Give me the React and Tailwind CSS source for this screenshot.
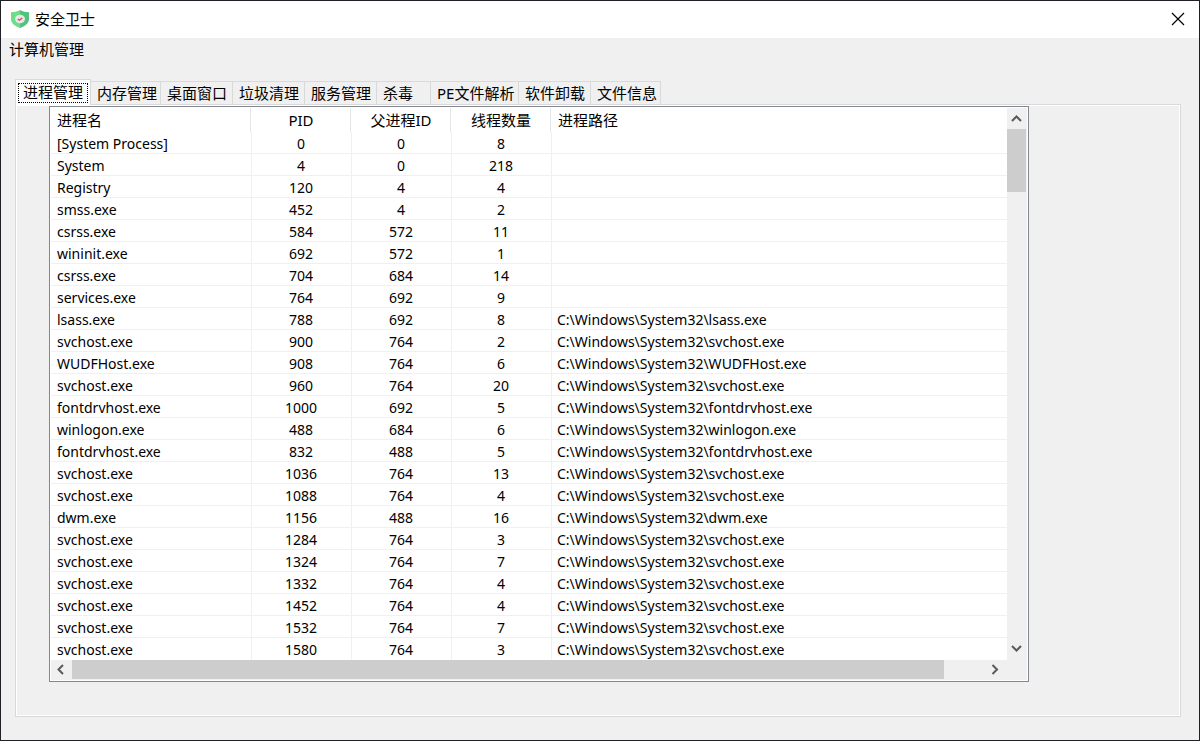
import React from "react";

const tabs = [
  ["进程管理", "w-[76px]"],
  ["内存管理", "w-[70px]"],
  ["桌面窗口", "w-[72px]"],
  ["垃圾清理", "w-[72px]"],
  ["服务管理", "w-[72px]"],
  ["杀毒", "w-[54px]"],
  ["PE文件解析", "w-[88px]"],
  ["软件卸载", "w-[72px]"],
  ["文件信息", "w-[70px]"],
];

const columns = ["进程名", "PID", "父进程ID", "线程数量", "进程路径"];

const SYS = "C:\\Windows\\System32\\";

const rows = [
  ["[System Process]", 0, 0, 8, ""],
  ["System", 4, 0, 218, ""],
  ["Registry", 120, 4, 4, ""],
  ["smss.exe", 452, 4, 2, ""],
  ["csrss.exe", 584, 572, 11, ""],
  ["wininit.exe", 692, 572, 1, ""],
  ["csrss.exe", 704, 684, 14, ""],
  ["services.exe", 764, 692, 9, ""],
  ["lsass.exe", 788, 692, 8, SYS + "lsass.exe"],
  ["svchost.exe", 900, 764, 2, SYS + "svchost.exe"],
  ["WUDFHost.exe", 908, 764, 6, SYS + "WUDFHost.exe"],
  ["svchost.exe", 960, 764, 20, SYS + "svchost.exe"],
  ["fontdrvhost.exe", 1000, 692, 5, SYS + "fontdrvhost.exe"],
  ["winlogon.exe", 488, 684, 6, SYS + "winlogon.exe"],
  ["fontdrvhost.exe", 832, 488, 5, SYS + "fontdrvhost.exe"],
  ["svchost.exe", 1036, 764, 13, SYS + "svchost.exe"],
  ["svchost.exe", 1088, 764, 4, SYS + "svchost.exe"],
  ["dwm.exe", 1156, 488, 16, SYS + "dwm.exe"],
  ["svchost.exe", 1284, 764, 3, SYS + "svchost.exe"],
  ["svchost.exe", 1324, 764, 7, SYS + "svchost.exe"],
  ["svchost.exe", 1332, 764, 4, SYS + "svchost.exe"],
  ["svchost.exe", 1452, 764, 4, SYS + "svchost.exe"],
  ["svchost.exe", 1532, 764, 7, SYS + "svchost.exe"],
  ["svchost.exe", 1580, 764, 3, SYS + "svchost.exe"],
];

function ShieldIcon() {
  return (
    <svg width="20" height="20" viewBox="0 0 20 20" aria-hidden="true">
      <path d="M10 1 C7.5 2.6 4 3.2 1 3.2 V10 C1 14.2 5 17.3 10 19 Z" fill="#6fdc8c" />
      <path d="M10 1 C12.5 2.6 16 3.2 19 3.2 V10 C19 14.2 15 17.3 10 19 Z" fill="#4fc47a" />
      <ellipse cx="10" cy="10" rx="5" ry="4.2" fill="#e4e9ec" />
      <path d="M7.8 10.2 L9.4 11.2 L12.2 9" fill="none" stroke="#e8532f" strokeWidth="1.5" />
    </svg>
  );
}

function Chevron({ d }) {
  return (
    <svg width="19" height="19" viewBox="0 0 19 19" aria-hidden="true">
      <path d={d} fill="none" stroke="#5a5a5a" strokeWidth="2" />
    </svg>
  );
}

function TitleBar() {
  return (
    <header className="flex h-[37px] items-center justify-between bg-white pr-[11px] pb-0.5 pl-[9px]">
      <div className="flex items-center gap-[5px]">
        <ShieldIcon />
        <h1>安全卫士</h1>
      </div>
      <button type="button" aria-label="关闭" className="flex size-5 items-center justify-center">
        <svg width="14" height="14" viewBox="0 0 14 14" aria-hidden="true">
          <path d="M1 1 L13 13 M13 1 L1 13" stroke="#000" strokeWidth="1.2" />
        </svg>
      </button>
    </header>
  );
}

function TabBar() {
  return (
    <div role="tablist" className="flex items-end">
      {tabs.map(([label, width], i) =>
        i === 0 ? (
          <button
            key={label}
            type="button"
            role="tab"
            aria-selected="true"
            className={`${width} relative -mb-px h-[26px] border-x border-t border-[#d9d9d9] bg-white p-0.5 text-left`}
          >
            <span className="block h-5 border border-dotted border-black pl-1 leading-4">{label}</span>
          </button>
        ) : (
          <button
            key={label}
            type="button"
            role="tab"
            aria-selected="false"
            className={`${width} h-[23px] border-t border-r border-[#d9d9d9] pl-[6px] text-left whitespace-nowrap`}
          >
            {label}
          </button>
        )
      )}
    </div>
  );
}

function ProcessTable() {
  return (
    <table className="w-full table-fixed border-separate border-spacing-0 bg-white">
      <colgroup>
        <col className="w-[201px]" />
        <col className="w-[100px]" />
        <col className="w-[100px]" />
        <col className="w-[100px]" />
        <col />
      </colgroup>
      <thead>
        <tr>
          {columns.map((c, i) => (
            <th key={c} scope="col" className="h-6 p-0 leading-6 font-normal">
              <div
                className={
                  i === 0
                    ? "mr-px h-6 border-r border-[#e5e5e5] pl-[6px] text-left"
                    : i === 4
                      ? "h-6 pl-[6px] text-left"
                      : "mr-px h-6 border-r border-[#e5e5e5] text-center"
                }
              >
                {c}
              </div>
            </th>
          ))}
        </tr>
      </thead>
      <tbody className="text-sm leading-[19px]">
        {rows.map((r, y) => (
          <tr key={y} className="last:*:border-b-white">
            {r.map((v, x) => (
              <td
                key={x}
                className={
                  x === 0
                    ? "h-[22px] border-r border-b border-[#f0f0f0] p-0 pt-0.5 pl-[6px]"
                    : x === 4
                      ? "h-[22px] border-b border-[#f0f0f0] p-0 pt-0.5 pl-[5px]"
                      : "h-[22px] border-r border-b border-[#f0f0f0] p-0 pt-0.5 pr-px text-center"
                }
              >
                {v}
              </td>
            ))}
          </tr>
        ))}
      </tbody>
    </table>
  );
}

export default function App() {
  return (
    <div className="flex min-h-screen flex-col border border-[#1f2026] bg-[#f0f0f0] font-['Noto_Sans','Noto_Sans_CJK_SC',sans-serif] text-[15px] leading-5 text-black">
      <TitleBar />
      <nav className="h-6 px-2">
        <button type="button" className="block leading-[22px]">计算机管理</button>
      </nav>
      <main className="flex grow flex-col pt-[17px] pr-[18px] pb-[23px] pl-[14px]">
        <TabBar />
        <section className="grow border border-[#d9d9d9]">
          <div className="h-full border border-white pr-[150px] pb-[33px] pl-8">
            <div className="border border-[#828790] bg-white p-px">
              <div className="flex">
                <div className="min-w-0 grow">
                  <ProcessTable />
                </div>
                <div className="flex w-5 shrink-0 flex-col bg-[#f0f0f0]">
                  <button type="button" aria-label="向上滚动" className="h-[21px]">
                    <Chevron d="M5 12 L9.5 7.5 L14 12" />
                  </button>
                  <div className="h-[63px] w-[19px] bg-[#cdcdcd]" />
                  <div className="grow" />
                  <button type="button" aria-label="向下滚动" className="h-[21px]">
                    <Chevron d="M5 6 L9.5 10.5 L14 6" />
                  </button>
                </div>
              </div>
              <div className="flex h-5 bg-[#f0f0f0]">
                <button type="button" aria-label="向左滚动" className="w-[21px]">
                  <Chevron d="M12 4 L7.5 8.5 L12 13" />
                </button>
                <div className="h-[19px] grow bg-[#cdcdcd]" />
                <div className="w-[41px]" />
                <button type="button" aria-label="向右滚动" className="w-[21px]">
                  <Chevron d="M7.5 4 L12 8.5 L7.5 13" />
                </button>
                <div className="w-[21px]" />
              </div>
            </div>
          </div>
        </section>
      </main>
    </div>
  );
}
